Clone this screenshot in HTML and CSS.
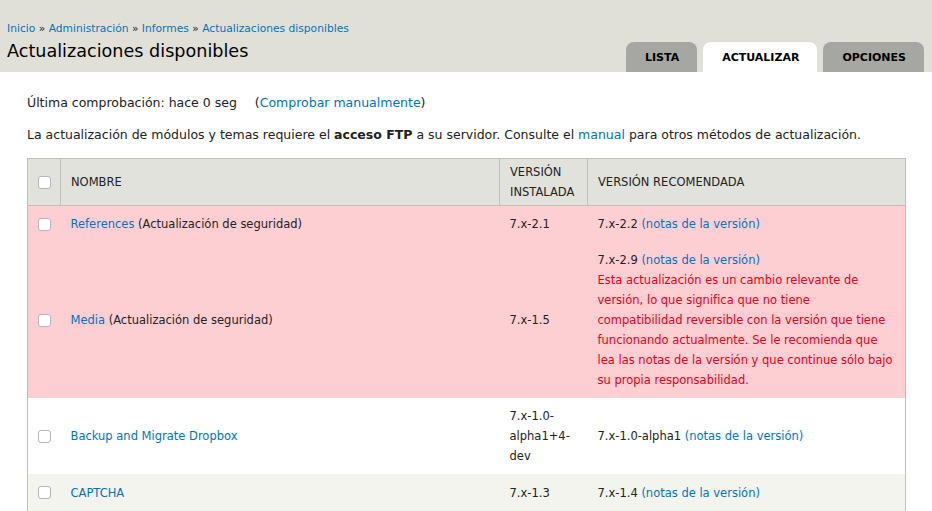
FILE: index.html
```html
<!DOCTYPE html>
<html lang="es">
<head>
  <meta charset="UTF-8">
  <title>Actualizaciones disponibles</title>
  <link rel="stylesheet" href="styles.css">
</head>
<body>
  <div class="branding">
    <div class="branding-text">
      <div class="breadcrumb">
        <a href="#">Inicio</a> » <a href="#">Administración</a> » <a href="#">Informes</a> » <a href="#">Actualizaciones disponibles</a>
      </div>
      <h1>Actualizaciones disponibles</h1>
    </div>
    <ul class="tabs">
      <li><a href="#">Lista</a></li>
      <li class="active"><a href="#">Actualizar</a></li>
      <li><a href="#">Opciones</a></li>
    </ul>
  </div>

  <div class="content">
    <p>Última comprobación: hace 0 seg <span class="check-link">(<a href="#">Comprobar manualmente</a>)</span></p>
    <p>La actualización de módulos y temas requiere el <strong>acceso FTP</strong> a su servidor. Consulte el <a href="#">manual</a> para otros métodos de actualización.</p>

    <table class="updates">
      <thead>
        <tr>
          <th class="col-check"><input type="checkbox"></th>
          <th class="col-name">Nombre</th>
          <th class="col-installed">Versión instalada</th>
          <th>Versión recomendada</th>
        </tr>
      </thead>
      <tbody>
        <tr class="error">
          <td class="col-check"><input type="checkbox"></td>
          <td><a href="#">References</a> (Actualización de seguridad)</td>
          <td>7.x-2.1</td>
          <td>7.x-2.2 <a href="#">(notas de la versión)</a></td>
        </tr>
        <tr class="error">
          <td class="col-check"><input type="checkbox"></td>
          <td><a href="#">Media</a> (Actualización de seguridad)</td>
          <td>7.x-1.5</td>
          <td>
            7.x-2.9 <a href="#">(notas de la versión)</a>
            <div class="warning">Esta actualización es un cambio relevante de versión, lo que significa que no tiene compatibilidad reversible con la versión que tiene funcionando actualmente. Se le recomienda que lea las notas de la versión y que continue sólo bajo su propia responsabilidad.</div>
          </td>
        </tr>
        <tr>
          <td class="col-check"><input type="checkbox"></td>
          <td><a href="#">Backup and Migrate Dropbox</a></td>
          <td>7.x-1.0-alpha1+4-dev</td>
          <td>7.x-1.0-alpha1 <a href="#">(notas de la versión)</a></td>
        </tr>
        <tr class="even">
          <td class="col-check"><input type="checkbox"></td>
          <td><a href="#">CAPTCHA</a></td>
          <td>7.x-1.3</td>
          <td>7.x-1.4 <a href="#">(notas de la versión)</a></td>
        </tr>
      </tbody>
    </table>
  </div>
</body>
</html>
```

FILE: styles.css
```css
body {
  margin: 0;
  font-family: 'DejaVu Sans', sans-serif;
  font-size: 12.5px;
  color: #222;
  background: #fff;
}
a {
  color: #0074bd;
  text-decoration: none;
}
.branding {
  background-color: #e0e0d8;
  display: flex;
  justify-content: space-between;
  align-items: flex-end;
  height: 72px;
  padding: 0 8px 0 7px;
}
.branding-text {
  padding-bottom: 9px;
}
.breadcrumb {
  font-size: 10.7px;
  line-height: 14px;
  margin-bottom: 3px;
}
h1 {
  margin: 0;
  font-size: 17.6px;
  font-weight: normal;
  color: #000;
  line-height: 24px;
}
.tabs {
  list-style: none;
  margin: 0;
  padding: 0;
  display: flex;
  gap: 6px;
}
.tabs li a {
  display: block;
  height: 30px;
  line-height: 31px;
  background-color: #a6a7a2;
  border-radius: 8px 8px 0 0;
  color: #000;
  font-weight: bold;
  text-transform: uppercase;
  font-size: 11px;
  padding: 0 18px 0 19px;
}
.tabs li.active a {
  background-color: #fff;
}
.content {
  padding: 21px 26px 0 27px;
}
.content p {
  margin: 0 0 12px;
  line-height: 20px;
}
.check-link {
  margin-left: 14px;
}
.updates {
  width: 100%;
  border-collapse: collapse;
  border: 1px solid #bebfb9;
  margin-top: 13px;
  font-size: 11.5px;
}
.updates th {
  background-color: #e1e2dc;
  border: 1px solid #bebfb9;
  text-align: left;
  font-weight: normal;
  text-transform: uppercase;
  padding: 3px 10px;
  line-height: 20px;
  height: 40px;
}
.updates td {
  padding: 8px 10px;
  line-height: 20px;
  vertical-align: middle;
}
.updates .col-check {
  width: 13px;
  padding: 0 9px 0 10px;
}
.updates .col-name {
  width: 418px;
}
.updates .col-installed {
  width: 67px;
}
.updates tr.error {
  background-color: #fecfd2;
}
.updates tr.even {
  background-color: #f3f4ee;
  height: 38px;
}
.warning {
  color: #e8001c;
}
input[type="checkbox"] {
  appearance: none;
  display: block;
  width: 13px;
  height: 13px;
  margin: 0;
  border: 1px solid #b5b5b5;
  border-radius: 3px;
  background: #fff;
}
```
